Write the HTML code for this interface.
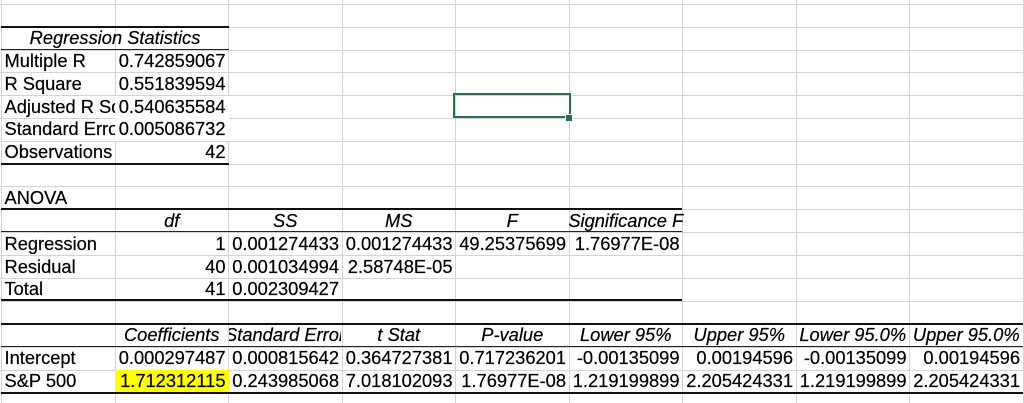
<!DOCTYPE html>
<html><head><meta charset="utf-8"><style>
html,body{margin:0;padding:0;background:#fff;}
body{width:1024px;height:403px;position:relative;overflow:hidden;font-family:"Liberation Sans",Arial,sans-serif;font-size:18.3px;color:#000;}
.v{position:absolute;top:0;width:1px;height:403px;background:#d4d4d4;}
.h{position:absolute;left:0;height:1px;width:1024px;background:#d4d4d4;}
.t{position:absolute;height:2px;background:#111;}
.s{position:absolute;height:1px;background:#222;}
.c{position:absolute;width:113.5px;height:22.85px;line-height:22px;white-space:nowrap;overflow:hidden;box-sizing:border-box;padding:0 3px;-webkit-text-stroke:0.2px #000;}
.r{text-align:right;}
.i{font-style:italic;display:flex;justify-content:center;padding:0;}
.ov{overflow:visible;}
</style></head><body>
<div class="v" style="left:1px"></div>
<div class="v" style="left:115px"></div>
<div class="v" style="left:228px"></div>
<div class="v" style="left:342px"></div>
<div class="v" style="left:455px"></div>
<div class="v" style="left:569px"></div>
<div class="v" style="left:682px"></div>
<div class="v" style="left:796px"></div>
<div class="v" style="left:909px"></div>
<div class="v" style="left:1023px"></div>
<div class="h" style="top:4px"></div>
<div class="h" style="top:27px"></div>
<div class="h" style="top:50px"></div>
<div class="h" style="top:72px"></div>
<div class="h" style="top:95px"></div>
<div class="h" style="top:118px"></div>
<div class="h" style="top:141px"></div>
<div class="h" style="top:164px"></div>
<div class="h" style="top:186px"></div>
<div class="h" style="top:209px"></div>
<div class="h" style="top:232px"></div>
<div class="h" style="top:255px"></div>
<div class="h" style="top:278px"></div>
<div class="h" style="top:301px"></div>
<div class="h" style="top:324px"></div>
<div class="h" style="top:347px"></div>
<div class="h" style="top:370px"></div>
<div class="h" style="top:392px"></div>

<div style="position:absolute;left:115px;top:370px;width:113.5px;height:22px;background:#ffff00;"></div>

<div class="t" style="left:1px;width:228px;top:26px"></div>
<div class="s" style="left:1px;width:228px;top:49px"></div>
<div class="t" style="left:1px;width:228px;top:163px"></div>
<div class="c i" style="left:1.5px;top:27px;width:227px">Regression Statistics</div>
<div class="c" style="left:1.5px;top:49.85px">Multiple R</div>
<div class="c r" style="left:115px;top:49.85px">0.742859067</div>
<div class="c" style="left:1.5px;top:72.7px">R Square</div>
<div class="c r" style="left:115px;top:72.7px">0.551839594</div>
<div class="c" style="left:1.5px;top:95.55px">Adjusted R Square</div>
<div class="c r" style="left:115px;top:95.55px;background:#fff">0.540635584</div>
<div class="c" style="left:1.5px;top:118.4px">Standard Error</div>
<div class="c r" style="left:115px;top:118.4px;background:#fff">0.005086732</div>
<div class="c" style="left:1.5px;top:141.25px">Observations</div>
<div class="c r" style="left:115px;top:141.25px">42</div>

<div style="position:absolute;left:453px;top:93px;width:114px;height:21px;border:2px solid #217346;"></div>
<div style="position:absolute;left:565px;top:114px;width:6px;height:6px;background:#217346;border:1px solid #fff;"></div>

<div class="c" style="left:1.5px;top:186.95px">ANOVA</div>
<div class="t" style="left:1px;width:681px;top:208px"></div>
<div class="s" style="left:1px;width:681px;top:231px"></div>
<div class="t" style="left:1px;width:681px;top:299px"></div>
<div class="c i" style="left:115px;top:209.8px">df</div>
<div class="c i" style="left:228.5px;top:209.8px">SS</div>
<div class="c i" style="left:342px;top:209.8px">MS</div>
<div class="c i" style="left:455.5px;top:209.8px">F</div>
<div class="c i ov" style="left:569px;top:209.8px">Significance F</div>
<div class="c" style="left:1.5px;top:232.65px">Regression</div>
<div class="c r" style="left:115px;top:232.65px">1</div>
<div class="c r" style="left:228.5px;top:232.65px">0.001274433</div>
<div class="c r" style="left:342px;top:232.65px">0.001274433</div>
<div class="c r" style="left:455.5px;top:232.65px">49.25375699</div>
<div class="c r" style="left:569px;top:232.65px">1.76977E-08</div>
<div class="c" style="left:1.5px;top:255.5px">Residual</div>
<div class="c r" style="left:115px;top:255.5px">40</div>
<div class="c r" style="left:228.5px;top:255.5px">0.001034994</div>
<div class="c r" style="left:342px;top:255.5px">2.58748E-05</div>
<div class="c" style="left:1.5px;top:278.35px">Total</div>
<div class="c r" style="left:115px;top:278.35px">41</div>
<div class="c r" style="left:228.5px;top:278.35px">0.002309427</div>

<div class="t" style="left:1px;width:1022px;top:323px"></div>
<div class="s" style="left:1px;width:1022px;top:346px"></div>
<div class="t" style="left:1px;width:1022px;top:392px"></div>
<div class="c i" style="left:115px;top:324.05px">Coefficients</div>
<div class="c i" style="left:229px;top:324.05px;width:112px">Standard Error</div>
<div class="c i" style="left:342px;top:324.05px">t Stat</div>
<div class="c i" style="left:455.5px;top:324.05px">P-value</div>
<div class="c i" style="left:569px;top:324.05px">Lower 95%</div>
<div class="c i" style="left:682.5px;top:324.05px">Upper 95%</div>
<div class="c i" style="left:796px;top:324.05px">Lower 95.0%</div>
<div class="c i" style="left:909.5px;top:324.05px">Upper 95.0%</div>

<div class="c" style="left:1.5px;top:346.9px">Intercept</div>
<div class="c r" style="left:115px;top:346.9px">0.000297487</div>
<div class="c r" style="left:228.5px;top:346.9px">0.000815642</div>
<div class="c r" style="left:342px;top:346.9px">0.364727381</div>
<div class="c r" style="left:455.5px;top:346.9px">0.717236201</div>
<div class="c r" style="left:569px;top:346.9px">-0.00135099</div>
<div class="c r" style="left:682.5px;top:346.9px">0.00194596</div>
<div class="c r" style="left:796px;top:346.9px">-0.00135099</div>
<div class="c r" style="left:909.5px;top:346.9px">0.00194596</div>

<div class="c" style="left:1.5px;top:369.75px">S&amp;P 500</div>
<div class="c r" style="left:115px;top:369.75px">1.712312115</div>
<div class="c r" style="left:228.5px;top:369.75px">0.243985068</div>
<div class="c r" style="left:342px;top:369.75px">7.018102093</div>
<div class="c r" style="left:455.5px;top:369.75px">1.76977E-08</div>
<div class="c r" style="left:569px;top:369.75px">1.219199899</div>
<div class="c r" style="left:682.5px;top:369.75px">2.205424331</div>
<div class="c r" style="left:796px;top:369.75px">1.219199899</div>
<div class="c r" style="left:909.5px;top:369.75px">2.205424331</div>
</body></html>
